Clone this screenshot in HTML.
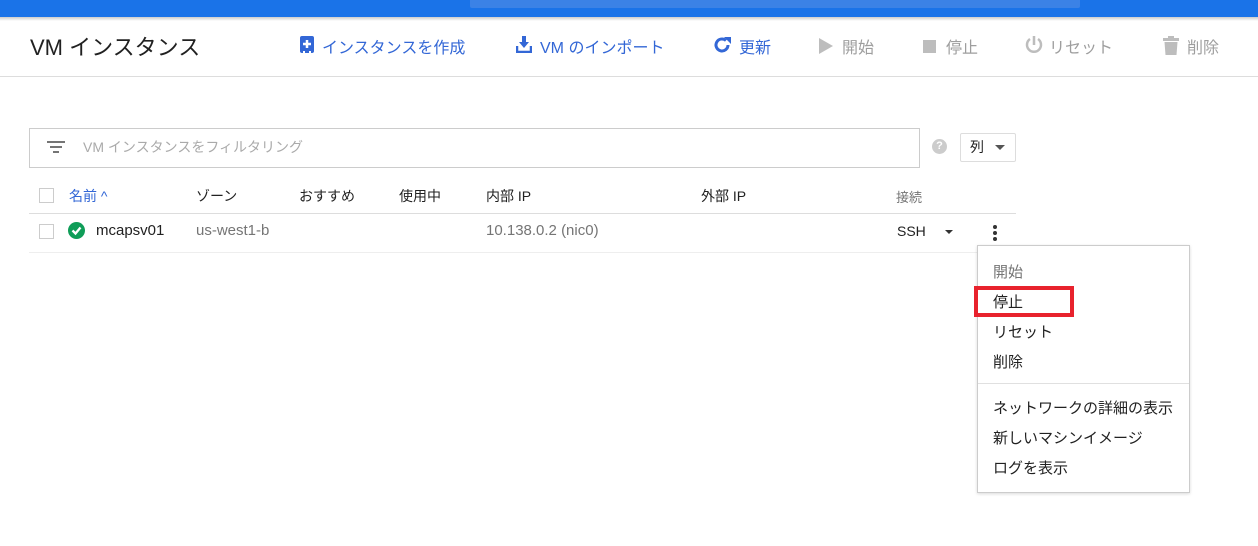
<!DOCTYPE html>
<html><head><meta charset="utf-8"><style>
*{margin:0;padding:0;box-sizing:border-box}
body{width:1258px;height:546px;background:#fff;position:relative;overflow:hidden;font-family:"Liberation Sans","Noto Sans CJK JP",sans-serif;font-size:14px;color:#212121}
.a{position:absolute;white-space:nowrap}
.blue{color:#3367d6}
.gray{color:#9e9e9e}
.m{font-size:15px}
</style></head><body>
<div class="a" style="left:0;top:0;width:1258px;height:17px;background:#1a73e8"></div>
<div class="a" style="top:0;left:470px;width:610px;height:8px;background:#3b82e6;border-radius:0 0 2px 2px"></div>
<div class="a" style="left:0;top:17px;width:1258px;height:4px;background:linear-gradient(#ccc,#fff)"></div>
<div class="a" style="left:0;top:76px;width:1258px;height:1px;background:#ddd"></div>
<div class="a" style="left:30px;top:30px;font-size:22px;color:#212121">VM インスタンス</div>

<svg class="a" style="left:300px;top:36px" width="16" height="18" viewBox="0 0 16 18"><rect x="0" y="0" width="14" height="17" rx="2" fill="#3367d6"/><path d="M7 4v8M3 8h8" stroke="#fff" stroke-width="2.5"/><rect x="3" y="15" width="2" height="3" fill="#fff"/><rect x="9" y="15" width="2" height="3" fill="#fff"/></svg>
<div class="a blue" style="left:322px;top:34px;font-size:16px">インスタンスを作成</div>
<svg class="a" style="left:516px;top:36px" width="16" height="17" viewBox="0 0 16 17"><path d="M6 0h4v6h3l-5 6-5-6h3z" fill="#3367d6"/><path d="M1 10v6h14v-6" stroke="#3367d6" stroke-width="2.5" fill="none"/></svg>
<div class="a blue" style="left:540px;top:34px;font-size:16px">VM のインポート</div>
<svg class="a" style="left:712px;top:35px" width="20" height="20" viewBox="0 0 20 20"><path d="M16 10a6 6 0 1 1-2-4.5" stroke="#3367d6" stroke-width="3" fill="none"/><path d="M12 2h7v7z" fill="#3367d6"/></svg>
<div class="a blue" style="left:739px;top:34px;font-size:16px">更新</div>
<svg class="a" style="left:819px;top:38px" width="14" height="16"><path d="M0 0l14 8-14 8z" fill="#bdbdbd"/></svg>
<div class="a gray" style="left:842px;top:34px;font-size:16px">開始</div>
<div class="a" style="left:923px;top:40px;width:13px;height:13px;background:#bdbdbd"></div>
<div class="a gray" style="left:946px;top:34px;font-size:16px">停止</div>
<svg class="a" style="left:1024px;top:35px" width="20" height="20" viewBox="0 0 20 20"><path d="M10 1v9" stroke="#bdbdbd" stroke-width="2.5"/><path d="M6 4a7 7 0 1 0 8 0" stroke="#bdbdbd" stroke-width="2.5" fill="none"/></svg>
<div class="a gray" style="left:1049px;top:34px;font-size:16px">リセット</div>
<svg class="a" style="left:1163px;top:36px" width="16" height="19"><rect x="0" y="2" width="16" height="3" fill="#bdbdbd"/><rect x="5" y="0" width="6" height="3" fill="#bdbdbd"/><path d="M1.5 6h13l-1 13h-11z" fill="#bdbdbd"/></svg>
<div class="a gray" style="left:1187px;top:34px;font-size:16px">削除</div>

<div class="a" style="left:29px;top:128px;width:891px;height:40px;border:1px solid #ccc"></div>
<svg class="a" style="left:47px;top:141px" width="18" height="13"><rect x="0" y="0" width="18" height="2" fill="#757575"/><rect x="3" y="5" width="12" height="2" fill="#757575"/><rect x="6" y="10" width="6" height="2" fill="#757575"/></svg>
<div class="a" style="left:83px;top:137px;color:#aaa;font-size:14px">VM インスタンスをフィルタリング</div>
<div class="a" style="left:932px;top:139px;width:15px;height:15px;border-radius:50%;background:#ccc;color:#fff;font-size:11px;text-align:center;line-height:15px;font-weight:bold">?</div>
<div class="a" style="left:960px;top:133px;width:56px;height:29px;border:1px solid #ddd;border-radius:2px;background:#fff"></div>
<div class="a" style="left:970px;top:137px">列</div>
<div class="a" style="left:995px;top:145px;border:5px solid transparent;border-top:5px solid #555"></div>

<div class="a" style="left:39px;top:188px;width:15px;height:15px;border:1px solid #ccc"></div>
<div class="a blue" style="left:69px;top:186px">名前 ^</div>
<div class="a" style="left:196px;top:186px">ゾーン</div>
<div class="a" style="left:299px;top:186px">おすすめ</div>
<div class="a" style="left:399px;top:186px">使用中</div>
<div class="a" style="left:486px;top:186px">内部 IP</div>
<div class="a" style="left:701px;top:186px">外部 IP</div>
<div class="a" style="left:896px;top:187px;color:#757575;font-size:13px">接続</div>
<div class="a" style="left:29px;top:213px;width:987px;height:1px;background:#ddd"></div>
<div class="a" style="left:39px;top:224px;width:15px;height:15px;border:1px solid #ccc"></div>
<svg class="a" style="left:68px;top:222px" width="17" height="17"><circle cx="8.5" cy="8.5" r="8.5" fill="#0f9d58"/><path d="M4.5 8.5l3 3 5-6" stroke="#fff" stroke-width="2.3" fill="none"/></svg>
<div class="a" style="left:96px;top:222px;font-size:15px">mcapsv01</div>
<div class="a" style="left:196px;top:222px;color:#757575;font-size:15px">us-west1-b</div>
<div class="a" style="left:486px;top:222px;color:#757575;font-size:15px">10.138.0.2 (nic0)</div>
<div class="a" style="left:897px;top:223px;font-size:14px">SSH</div>
<div class="a" style="left:945px;top:230px;border:4px solid transparent;border-top:4px solid #333"></div>
<div class="a" style="left:993px;top:225px;width:4px;height:4px;border-radius:50%;background:#333;box-shadow:0 6px 0 #333,0 12px 0 #333"></div>
<div class="a" style="left:29px;top:252px;width:987px;height:1px;background:#eee"></div>

<div class="a" style="left:977px;top:245px;width:213px;height:248px;border:1px solid #ccc;background:#fff;box-shadow:0 1px 3px rgba(0,0,0,.15)"></div>
<div class="a m" style="left:993px;top:261px;color:#757575">開始</div>
<div class="a" style="left:974px;top:286px;width:100px;height:31px;border:4px solid #e8222d"></div>
<div class="a m" style="left:993px;top:291px">停止</div>
<div class="a m" style="left:993px;top:321px">リセット</div>
<div class="a m" style="left:993px;top:351px">削除</div>
<div class="a" style="left:978px;top:383px;width:211px;height:1px;background:#e0e0e0"></div>
<div class="a m" style="left:993px;top:397px">ネットワークの詳細の表示</div>
<div class="a m" style="left:993px;top:427px">新しいマシンイメージ</div>
<div class="a m" style="left:993px;top:457px">ログを表示</div>
</body></html>
